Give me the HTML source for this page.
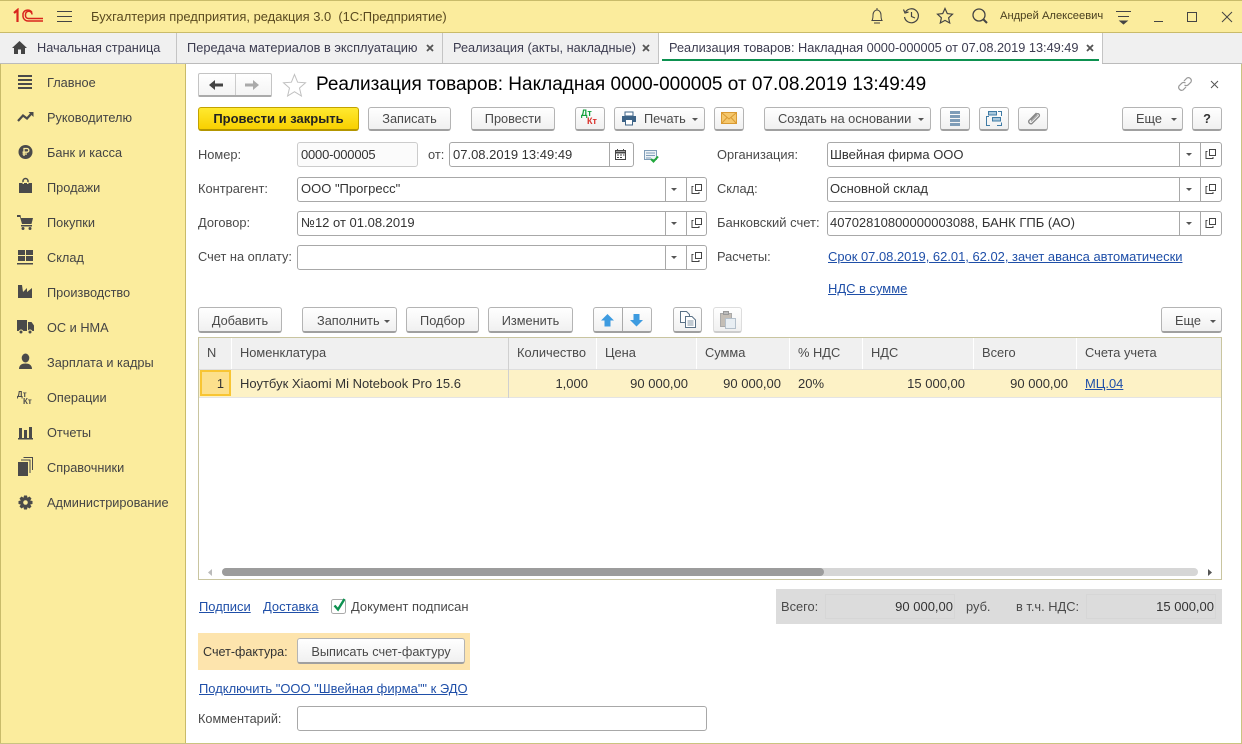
<!DOCTYPE html>
<html lang="ru"><head><meta charset="utf-8"><title>1С</title>
<style>
html,body{margin:0;padding:0}
body{position:relative;width:1242px;height:744px;overflow:hidden;background:#fff;font:12.85px/16px "Liberation Sans",Arial,sans-serif;color:#4a4a4a}
.a,.t,.b,.i,svg{position:absolute}
.t{white-space:nowrap;line-height:16px}
.d{color:#333;font-size:13px}
.l{color:#1f4fa8;text-decoration:underline;font-size:12.95px}
.b{box-sizing:border-box;height:24px;border:1px solid #b4b4b4;border-bottom:2px solid #a0a0a0;border-radius:3px;background:linear-gradient(#fff,#f0f0f0);text-align:center;line-height:22px;font-size:12.75px;color:#4a4a4a;white-space:nowrap}
.i{box-sizing:border-box;height:25px;border:1px solid #a8a8a8;border-radius:3px;background:#fff}
.s{position:absolute;top:0;bottom:0;width:1px;background:#a8a8a8}
.h{position:absolute;top:338px;height:31px;background:#f0f0f0;line-height:29px;box-sizing:border-box;padding-left:8px;white-space:nowrap}
.c{position:absolute;top:370px;height:27px;background:#fdf2c6;line-height:27px;font-size:13px;box-sizing:border-box;padding:0 8px;white-space:nowrap;color:#333;text-align:right}
.m{color:#444;position:absolute;left:47px;white-space:nowrap;font-size:12.75px}
.k{font-size:12.75px;color:#3c3c50}
.tri{position:absolute;width:0;height:0;border-left:3px solid transparent;border-right:3px solid transparent;border-top:3px solid #555}
</style></head><body>

<!-- title bar -->
<div class="a" style="left:0;top:0;width:1242px;height:32px;background:#fbec9d;border-top:1px solid #c9bb6a;box-sizing:border-box"></div>
<svg style="left:13px;top:8px" width="32" height="16" viewBox="0 0 32 16" fill="none" stroke="#d9251d"><path d="M1 5L4.500 2V14" stroke-width="2.200"/><path d="M19 4.500A5 5 0 0 0 10 5.500V8.500A5 5 0 0 0 15 13H30" stroke-width="1.500"/><path d="M19 6.500A3 3 0 0 0 12.500 6.500V8A3 3 0 0 0 15.500 10.500H30" stroke-width="1.500"/></svg>
<svg style="left:57px;top:10px" width="15" height="12" stroke="#444"><path d="M0 1.500H15M0 6.500H15M0 11.500H15"/></svg>
<div class="t" style="left:91px;top:9px;color:#5a4a20;font-size:12.930px">Бухгалтерия предприятия, редакция 3.0&nbsp; (1С:Предприятие)</div>
<svg style="left:868px;top:7px" width="18" height="18" fill="none" stroke="#444"><path d="M4 13.500C5 12 5 10 5 8C5 5 7 3 9 3S13 5 13 8C13 10 13 12 14 13.500ZM9 1V3M6 16H12"/></svg>
<svg style="left:902px;top:7px" width="18" height="18" fill="none" stroke="#444" stroke-width="1.200"><path d="M3.500 5A7 7 0 1 1 2.500 10"/><path d="M1.500 2.500L3 6L6.500 5M9.500 5V9.500L13 11"/></svg>
<svg style="left:936px;top:7px" width="18" height="18" fill="none" stroke="#444" stroke-width="1.200"><path d="M9 1.500L11.300 6.600L16.500 7.200L12.600 10.800L13.700 16L9 13.400L4.300 16L5.400 10.800L1.500 7.200L6.700 6.600Z"/></svg>
<svg style="left:971px;top:7px" width="18" height="18" fill="none" stroke="#444" stroke-width="1.300"><circle cx="8" cy="8" r="6"/><path d="M12.500 12.500L16 16" stroke-width="2"/></svg>
<div class="t" style="left:1000px;top:8px;font-size:11.200px;color:#4a4020">Андрей Алексеевич</div>
<svg style="left:1116px;top:10px" width="15" height="15" stroke="#444"><path d="M0 1.500H15M2 6.500H13"/><path d="M4 11H11L7.500 14Z" fill="#444"/></svg>
<svg style="left:1150px;top:10px" width="86" height="13" fill="none" stroke="#444"><path d="M4 11.500H13"/><rect x="37.500" y="2.500" width="9" height="9"/><path d="M72 2L82 12M82 2L72 12"/></svg>

<!-- tabs -->
<div class="a" style="left:0;top:32px;width:1242px;height:32px;background:#f0f0f0;border-bottom:1px solid #bbb;border-top:1px solid #c9bb6a;box-sizing:border-box"></div>
<div class="a" style="left:659px;top:33px;width:443px;height:31px;background:#fff"></div>
<div class="a" style="left:176px;top:33px;width:1px;height:30px;background:#c4c4c4"></div>
<div class="a" style="left:442px;top:33px;width:1px;height:30px;background:#c4c4c4"></div>
<div class="a" style="left:658px;top:33px;width:1px;height:30px;background:#c4c4c4"></div>
<div class="a" style="left:1102px;top:33px;width:1px;height:30px;background:#c4c4c4"></div>
<div class="a" style="left:662px;top:59px;width:437px;height:2px;background:#0d9150"></div>
<svg style="left:12px;top:41px" width="15" height="13" fill="#444"><path d="M7.500 0L15 7H13V13H9V8.500H6V13H2V7H0Z"/></svg>
<div class="t k" style="left:37px;top:40px">Начальная страница</div>
<div class="t k" style="left:187px;top:40px;font-size:12.820px">Передача материалов в эксплуатацию</div>
<div class="t k" style="left:453px;top:40px">Реализация (акты, накладные)</div>
<div class="t k" style="left:669px;top:40px">Реализация товаров: Накладная 0000-000005 от 07.08.2019 13:49:49</div>
<svg style="left:426px;top:44px" width="232" height="8" stroke="#555" stroke-width="1.800"><path d="M1 1L7 7M7 1L1 7M217 1L223 7M223 1L217 7"/></svg>
<svg style="left:1086px;top:44px" width="8" height="8" stroke="#555" stroke-width="1.800"><path d="M1 1L7 7M7 1L1 7"/></svg>

<!-- sidebar -->
<div class="a" style="left:0;top:64px;width:186px;height:680px;background:#fbec9d;border-left:1px solid #c9bb6a;border-right:1px solid #c9bb6a;box-sizing:border-box"></div>
<div class="a" style="left:0;top:743px;width:1242px;height:1px;background:#c9c480"></div>
<div class="a" style="left:1241px;top:64px;width:1px;height:680px;background:#c9c480"></div>
<div class="m" style="top:75px">Главное</div>
<div class="m" style="top:110px">Руководителю</div>
<div class="m" style="top:145px">Банк и касса</div>
<div class="m" style="top:180px">Продажи</div>
<div class="m" style="top:215px">Покупки</div>
<div class="m" style="top:250px">Склад</div>
<div class="m" style="top:285px">Производство</div>
<div class="m" style="top:320px">ОС и НМА</div>
<div class="m" style="top:355px">Зарплата и кадры</div>
<div class="m" style="top:390px">Операции</div>
<div class="m" style="top:425px">Отчеты</div>
<div class="m" style="top:460px">Справочники</div>
<div class="m" style="top:495px">Администрирование</div>
<svg style="left:16px;top:72px" width="20" height="450" fill="#4a4a4a">
<path d="M2 3H16V5H2ZM2 7H16V9H2ZM2 11H16V13H2ZM2 15H16V17H2Z"/>
<path d="M2 49L7 43.500L11 46.500L15 42" fill="none" stroke="#4a4a4a" stroke-width="2.200"/><path d="M12.500 40H17.500V45Z"/>
<circle cx="9.500" cy="80" r="7"/><path d="M8 84V76.500H11A1.800 1.800 0 0 1 11 80.200H6.500M6.500 82H11" fill="none" stroke="#fbec9d" stroke-width="1.300"/>
<g transform="translate(0,-1)"><path d="M3 112H16V122H3Z"/><path d="M7 113V110A2.500 2.500 0 0 1 12 110V113" fill="none" stroke="#4a4a4a" stroke-width="1.500"/><rect x="6.500" y="111" width="1.500" height="2" fill="#fbec9d"/><rect x="11" y="111" width="1.500" height="2" fill="#fbec9d"/></g>
<g transform="translate(0,-2)"><path d="M1 145H4.500L5 148H17L15.500 154H6L4 147H1Z"/><rect x="5" y="155" width="11" height="1.500"/><circle cx="7" cy="158.500" r="1.500"/><circle cx="14" cy="158.500" r="1.500"/></g>
<path d="M2 178H9V183H2ZM10 178H17V183H10ZM2 184H9V189H2ZM10 184H17V189H10ZM1 191H17V192.500H1Z"/>
<path d="M2 226V213H6L7 220L11 216V220L16 216V226Z"/>
<path d="M1 248H11V259H1ZM12 250H15.500L18 253.500V259H12Z"/><circle cx="5" cy="260" r="2" stroke="#fbec9d"/><circle cx="14" cy="260" r="2" stroke="#fbec9d"/>
<g transform="translate(0,2)"><ellipse cx="9.500" cy="284" rx="3.800" ry="4.500"/><path d="M3 295C3 291 6 289.500 9.500 289.500S16 291 16 295Z"/></g>
<text x="1" y="325" font-family="Liberation Sans" font-size="8" font-weight="bold">Дт</text><text x="7" y="332" font-family="Liberation Sans" font-size="8" font-weight="bold">Кт</text>
<path d="M3 356H6V366H3ZM8 358H11V366H8ZM13 355H16V366H13ZM2 366H17V367.500H2Z"/>
<g transform="translate(0,2)"><path d="M2 388H12V402H2Z"/><path d="M5 386H14V399M7.500 383.500H16.500V396" fill="none" stroke="#4a4a4a"/></g>
<g transform="translate(0,5.500)"><path d="M8 418H11L11.500 420.300L13.500 419L15.500 421L14.200 423L16.500 423.500V426.500L14.200 427L15.500 429L13.500 431L11.500 429.700L11 432H8L7.500 429.700L5.500 431L3.500 429L4.800 427L2.500 426.500V423.500L4.800 423L3.500 421L5.500 419L7.500 420.300Z"/><circle cx="9.500" cy="425" r="2.300" fill="#fbec9d"/></g>
</svg>

<!-- form header -->
<div class="a" style="left:198px;top:73px;width:74px;height:24px;box-sizing:border-box;border:1px solid #c4c4c4;border-bottom:2px solid #aaa;border-radius:2px;background:linear-gradient(#fff,#f4f4f4)"></div>
<div class="a" style="left:235px;top:74px;width:1px;height:21px;background:#ccc"></div>
<svg style="left:209px;top:79px" width="55" height="12"><path d="M0 6L6 1V4.500H14V7.500H6V11Z" fill="#444"/><path d="M50 6L44 1V4.500H36V7.500H44V11Z" fill="#aaa"/></svg>
<svg style="left:282px;top:73px" width="25" height="24" fill="#fff" stroke="#c0c0c0"><path d="M12.500 1.500L15.600 9.200L23.500 9.800L17.500 15L19.400 23L12.500 18.700L5.600 23L7.500 15L1.500 9.800L9.400 9.200Z"/></svg>
<div class="t" style="left:316px;top:74px;font-size:19px;line-height:22px;color:#000">Реализация товаров: Накладная 0000-000005 от 07.08.2019 13:49:49</div>
<svg style="left:1176px;top:75px" width="18" height="18" fill="none" stroke="#999" stroke-width="1.200"><path d="M8 6L11 3A3 3 0 0 1 15 7L12 10A3 3 0 0 1 8.500 10M10 12L7 15A3 3 0 0 1 3 11L6 8A3 3 0 0 1 9.500 8"/></svg>
<svg style="left:1210px;top:80px" width="9" height="9" stroke="#555"><path d="M1 1L8 8M8 1L1 8"/></svg>

<!-- command bar -->
<div class="b" style="left:198px;top:107px;width:161px;background:linear-gradient(#ffe930,#f8d000);border-color:#c2a200;border-bottom-color:#b39600;color:#222;font-weight:bold;font-size:13px">Провести и закрыть</div>
<div class="b" style="left:368px;top:107px;width:83px">Записать</div>
<div class="b" style="left:471px;top:107px;width:84px">Провести</div>
<div class="b" style="left:575px;top:107px;width:30px"></div>
<div class="t" style="left:581px;top:108px;font-size:9px;line-height:10px;font-weight:bold;color:#13a03c">Дт</div>
<div class="t" style="left:587px;top:116px;font-size:9px;line-height:10px;font-weight:bold;color:#d9302a">Кт</div>
<div class="b" style="left:614px;top:107px;width:91px;text-align:left;padding-left:29px">Печать</div>
<div class="tri" style="left:692px;top:118px"></div>
<svg style="left:621px;top:111px" width="16" height="15"><path d="M4 1H12V5H4Z" fill="#fff" stroke="#3d6387"/><path d="M1 5H15V11H12V8H4V11H1Z" fill="#3d6387"/><path d="M4.500 8.500H11.500V14H4.500Z" fill="#fff" stroke="#3d6387"/></svg>
<div class="b" style="left:714px;top:107px;width:30px"></div>
<svg style="left:721px;top:112px" width="16" height="12"><rect x=".5" y=".5" width="15" height="11" fill="#f5c76c" stroke="#d99a33"/><path d="M1 1L8 7L15 1M1 11L6 5.500M15 11L10 5.500" fill="none" stroke="#d99a33"/></svg>
<div class="b" style="left:764px;top:107px;width:167px;text-align:left;padding-left:13px;font-size:12.850px">Создать на основании</div>
<div class="tri" style="left:918px;top:118px"></div>
<div class="b" style="left:940px;top:107px;width:30px"></div>
<svg style="left:950px;top:111px" width="10" height="15" fill="#7f9db8"><rect width="10" height="3"/><rect y="4" width="10" height="3"/><rect y="8" width="10" height="3"/><rect y="12" width="10" height="3"/></svg>
<div class="b" style="left:979px;top:107px;width:30px"></div>
<svg style="left:986px;top:111px" width="16" height="15" fill="none" stroke="#3f7ba5"><rect x="2.500" y=".5" width="8" height="3.500" fill="#a9c8dd"/><rect x="6.500" y="6.500" width="8" height="3.500" fill="#a9c8dd"/><path d="M3 5.500H.5V14.500H4M12 .5H15.500V5M11 14.500H15.500V11.500"/></svg>
<div class="b" style="left:1018px;top:107px;width:30px"></div>
<svg style="left:1026px;top:111px" width="15" height="15" fill="none" stroke="#888" stroke-width="1.300"><path d="M10.500 2L3 9.500A2.200 2.200 0 0 0 6 12.500L13 5.500A1.400 1.400 0 0 0 10.500 3.200L4.800 9"/><path d="M11.500 4L5 10.500" stroke="#aaa"/></svg>
<div class="b" style="left:1122px;top:107px;width:61px;text-align:left;padding-left:13px">Еще</div>
<div class="tri" style="left:1171px;top:118px"></div>
<div class="b" style="left:1192px;top:107px;width:30px;font-weight:bold;color:#333">?</div>

<!-- field labels -->
<div class="t" style="left:198px;top:147px">Номер:</div>
<div class="t" style="left:198px;top:181px">Контрагент:</div>
<div class="t" style="left:198px;top:215px">Договор:</div>
<div class="t" style="left:198px;top:249px;font-size:12.800px">Счет на оплату:</div>
<div class="t" style="left:428px;top:147px">от:</div>
<div class="t" style="left:717px;top:147px">Организация:</div>
<div class="t" style="left:717px;top:181px">Склад:</div>
<div class="t" style="left:717px;top:215px;font-size:13px">Банковский счет:</div>
<div class="t" style="left:717px;top:249px">Расчеты:</div>

<!-- inputs -->
<div class="i" style="left:297px;top:142px;width:121px;background:#fbfbfb;border-color:#ccc"></div>
<div class="i" style="left:449px;top:142px;width:185px"><div class="s" style="left:159px"></div></div>
<div class="i" style="left:297px;top:177px;width:410px"><div class="s" style="left:367px"></div><div class="s" style="left:388px"></div></div>
<div class="i" style="left:297px;top:211px;width:410px"><div class="s" style="left:367px"></div><div class="s" style="left:388px"></div></div>
<div class="i" style="left:297px;top:245px;width:410px"><div class="s" style="left:367px"></div><div class="s" style="left:388px"></div></div>
<div class="i" style="left:827px;top:142px;width:395px"><div class="s" style="left:351px"></div><div class="s" style="left:372px"></div></div>
<div class="i" style="left:827px;top:177px;width:395px"><div class="s" style="left:351px"></div><div class="s" style="left:372px"></div></div>
<div class="i" style="left:827px;top:211px;width:395px"><div class="s" style="left:351px"></div><div class="s" style="left:372px"></div></div>
<div class="t d" style="left:301px;top:147px;letter-spacing:-.2px">0000-000005</div>
<div class="t d" style="left:453px;top:147px">07.08.2019 13:49:49</div>
<div class="t d" style="left:301px;top:181px">ООО "Прогресс"</div>
<div class="t d" style="left:301px;top:215px">№12 от 01.08.2019</div>
<div class="t d" style="left:830px;top:147px">Швейная фирма ООО</div>
<div class="t d" style="left:830px;top:181px">Основной склад</div>
<div class="t d" style="left:830px;top:215px">40702810800000003088, БАНК ГПБ (АО)</div>
<div class="tri" style="left:671px;top:188px"></div><div class="tri" style="left:671px;top:222px"></div><div class="tri" style="left:671px;top:256px"></div>
<div class="tri" style="left:1186px;top:153px"></div><div class="tri" style="left:1186px;top:188px"></div><div class="tri" style="left:1186px;top:222px"></div>
<svg style="left:0;top:0" width="1242" height="280" fill="none" stroke="#444">
<path d="M693.500 186.500H692V193.500H699V192"/><rect x="695.500" y="184.500" width="6" height="6"/>
<path d="M693.500 220.500H692V227.500H699V226"/><rect x="695.500" y="218.500" width="6" height="6"/>
<path d="M693.500 254.500H692V261.500H699V260"/><rect x="695.500" y="252.500" width="6" height="6"/>
<path d="M1207.500 151.500H1206V158.500H1213V157"/><rect x="1209.500" y="149.500" width="6" height="6"/>
<path d="M1207.500 186.500H1206V193.500H1213V192"/><rect x="1209.500" y="184.500" width="6" height="6"/>
<path d="M1207.500 220.500H1206V227.500H1213V226"/><rect x="1209.500" y="218.500" width="6" height="6"/>
<rect x="615.500" y="150.500" width="10" height="9"/><path d="M615 152.500H626" stroke-width="2"/><path d="M617.500 149V151M623.500 149V151M617 155H619M620 155H622M623 155H624.500M617 157.500H619M620 157.500H622" />
<rect x="644.500" y="150.500" width="12" height="9" stroke="#7f9db8" fill="#eef3f7"/><path d="M646 153H655M646 155.500H655M646 158H651" stroke="#7f9db8"/><path d="M651 159L653.500 161.500L658 156.500" stroke="#21a83c" stroke-width="2"/>
</svg>
<div class="t l" style="left:828px;top:249px">Срок 07.08.2019, 62.01, 62.02, зачет аванса автоматически</div>
<div class="t l" style="left:828px;top:281px">НДС в сумме</div>

<!-- table toolbar -->
<div class="b" style="left:198px;top:307px;width:84px;height:26px;line-height:25px">Добавить</div>
<div class="b" style="left:302px;top:307px;width:95px;height:26px;line-height:25px;text-align:left;padding-left:14px">Заполнить</div>
<div class="tri" style="left:384px;top:320px"></div>
<div class="b" style="left:406px;top:307px;width:73px;height:26px;line-height:25px">Подбор</div>
<div class="b" style="left:488px;top:307px;width:85px;height:26px;line-height:25px">Изменить</div>
<div class="b" style="left:593px;top:307px;width:59px;height:26px"></div>
<div class="a" style="left:622px;top:308px;width:1px;height:23px;background:#aaa"></div>
<svg style="left:600px;top:314px" width="44" height="13" fill="#3d9be0"><path d="M7.500 0L14 6.500H10.500V12.500H4.500V6.500H1Z"/><path d="M36.500 12.500L43 6H39.500V0H33.500V6H30Z"/></svg>
<div class="b" style="left:673px;top:307px;width:29px;height:26px"></div>
<svg style="left:680px;top:311px" width="16" height="18" fill="#fff" stroke="#5b7287"><path d="M.5 .5H6.500L9.500 3.500V11.500H.5Z"/><path d="M5.500 5.500H12L15.500 9V16.500H5.500Z"/><path d="M7.500 10H13.500M7.500 12H13.500M7.500 14H13.500" stroke-width=".8"/></svg>
<div class="b" style="left:713px;top:307px;width:29px;height:26px;border-color:#ddd;border-bottom-color:#ccc"></div>
<svg style="left:720px;top:311px" width="16" height="18"><path d="M.5 2.500H11.500V15.500H.5Z" fill="#c4beb6" stroke="#aaa"/><rect x="3.500" y=".5" width="5" height="3" fill="#bbb" stroke="#999"/><path d="M5.500 7.500H15.500V17.500H5.500Z" fill="#e8eef3" stroke="#b4c0cb"/></svg>
<div class="b" style="left:1161px;top:307px;width:61px;height:26px;line-height:25px;text-align:left;padding-left:13px">Еще</div>
<div class="tri" style="left:1210px;top:320px"></div>

<!-- table -->
<div class="a" style="left:198px;top:337px;width:1024px;height:243px;box-sizing:border-box;border:1px solid #c9c5a0;background:#fff"></div>
<div class="h" style="left:199px;width:32px">N</div>
<div class="h" style="left:232px;width:276px">Номенклатура</div>
<div class="h" style="left:509px;width:87px">Количество</div>
<div class="h" style="left:597px;width:99px">Цена</div>
<div class="h" style="left:697px;width:92px">Сумма</div>
<div class="h" style="left:790px;width:72px">% НДС</div>
<div class="h" style="left:863px;width:110px">НДС</div>
<div class="h" style="left:974px;width:102px">Всего</div>
<div class="h" style="left:1077px;width:144px">Счета учета</div>
<div class="a" style="left:199px;top:369px;width:1022px;height:1px;background:#dedede"></div>
<div class="a" style="left:199px;top:397px;width:1022px;height:1px;background:#e4e4e4"></div>
<div class="c" style="left:199px;width:1022px"></div>
<div class="a" style="left:200px;top:370px;width:31px;height:26px;box-sizing:border-box;border:2px solid #f8c533;background:#fce08c;text-align:right;padding-right:5px;line-height:23px;color:#333">1</div>
<div class="c" style="left:232px;width:276px;text-align:left">Ноутбук Xiaomi Mi Notebook Pro 15.6</div>
<div class="a" style="left:508px;top:338px;width:1px;height:60px;background:#d0d0d0"></div>
<div class="c" style="left:509px;width:87px">1,000</div>
<div class="c" style="left:597px;width:99px">90 000,00</div>
<div class="c" style="left:697px;width:92px">90 000,00</div>
<div class="c" style="left:790px;width:72px;text-align:left">20%</div>
<div class="c" style="left:863px;width:110px">15 000,00</div>
<div class="c" style="left:974px;width:102px">90 000,00</div>
<div class="c" style="left:1077px;width:144px;text-align:left"><span class="l">МЦ.04</span></div>
<div class="a" style="left:222px;top:568px;width:976px;height:8px;border-radius:4px;background:#d6d6d6"></div>
<div class="a" style="left:222px;top:568px;width:602px;height:8px;border-radius:4px;background:#9c9c9c"></div>
<svg style="left:207px;top:569px" width="1008" height="7"><path d="M5 0V7L1 3.500Z" fill="#bbb"/><path d="M1001 0V7L1005 3.500Z" fill="#555"/></svg>

<!-- bottom -->
<div class="t l" style="left:199px;top:599px">Подписи</div>
<div class="t l" style="left:263px;top:599px">Доставка</div>
<svg style="left:330px;top:597px" width="17" height="17"><rect x="1.500" y="2.500" width="14" height="14" rx="2" fill="#fff" stroke="#aaa"/><path d="M4.500 8.500L8 12.500L14.500 2" fill="none" stroke="#0d9150" stroke-width="2.400"/></svg>
<div class="t" style="left:351px;top:599px;font-size:12.950px">Документ подписан</div>
<div class="a" style="left:776px;top:589px;width:446px;height:35px;background:#dcdcdc"></div>
<div class="a" style="left:825px;top:594px;width:130px;height:25px;box-sizing:border-box;border:1px solid #d6d6d6"></div>
<div class="a" style="left:1086px;top:594px;width:130px;height:25px;box-sizing:border-box;border:1px solid #d6d6d6"></div>
<div class="t" style="left:781px;top:599px">Всего:</div>
<div class="t d" style="right:289px;top:599px">90 000,00</div>
<div class="t" style="left:966px;top:599px">руб.</div>
<div class="t" style="left:1016px;top:599px">в т.ч. НДС:</div>
<div class="t d" style="right:28px;top:599px">15 000,00</div>
<div class="a" style="left:198px;top:633px;width:272px;height:37px;background:#fde4ad"></div>
<div class="t" style="left:203px;top:644px;color:#333;font-size:12.600px">Счет-фактура:</div>
<div class="b" style="left:297px;top:638px;width:168px;height:26px;line-height:25px">Выписать счет-фактуру</div>
<div class="t l" style="left:199px;top:681px">Подключить "ООО "Швейная фирма"" к ЭДО</div>
<div class="t" style="left:198px;top:711px;font-size:12.700px">Комментарий:</div>
<div class="i" style="left:297px;top:706px;width:410px"></div>
</body></html>
